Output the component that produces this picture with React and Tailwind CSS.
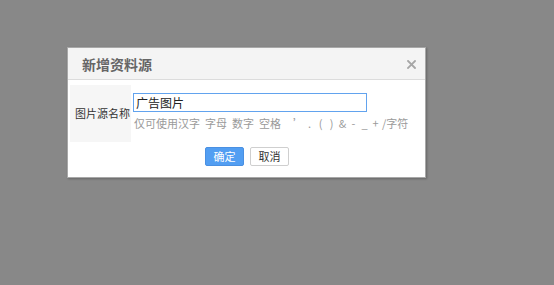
import React from 'react';

const font = { fontFamily: '"Noto Sans CJK SC", "Noto Sans", sans-serif' };

const symbols = ['’', '.', '(', ')', '&', '-', '_', '+'];

export default function App() {
  return (
    <div className="w-[554px] h-[285px] bg-[#888888] overflow-hidden" style={font}>
      <div className="ml-[67px] pt-[47px]">
        <div className="w-[359px] h-[131px] bg-white border border-[#a8a8a8] shadow-[1px_1px_2px_rgba(0,0,0,0.25)] flex flex-col">
          {/* header */}
          <div className="h-[32px] bg-[#f4f4f4] border-b border-[#dcdcdc] flex items-center justify-between pl-[14px] pr-[9px]">
            <span className="text-[14px] font-bold text-[#666] leading-none">新增资料源</span>
            <svg width="9" height="9" viewBox="0 0 9 9" className="mt-[1px]">
              <path d="M1 1 L8 8 M8 1 L1 8" stroke="#a6a6a6" strokeWidth="1.8" strokeLinecap="square" />
            </svg>
          </div>

          {/* body */}
          <div className="flex pt-[5px] pl-[2px]">
            <div className="w-[61px] h-[57px] bg-[#f6f6f6] flex items-center justify-end pr-[1px]">
              <span className="text-[11px] text-[#333] leading-none whitespace-nowrap">图片源名称</span>
            </div>
            <div className="pl-[2px] pt-[8px]">
              <div className="w-[234px] h-[19px] border border-[#62a3ee] flex items-center px-[2px]">
                <span className="text-[12px] text-[#222] leading-none">广告图片</span>
              </div>
              <div className="mt-[6px] flex items-center text-[11px] text-[#9a9a9a] leading-none whitespace-nowrap pl-[1px]">
                <span>仅可使用汉字</span>
                <span className="ml-[5px]">字母</span>
                <span className="ml-[5px]">数字</span>
                <span className="ml-[5px]">空格</span>
                <span className="ml-[12px] flex">
                  {symbols.map((s, i) => (
                    <span key={i} className="w-[11px] text-center">{s}</span>
                  ))}
                </span>
                <span className="ml-[1px]">/字符</span>
              </div>
            </div>
          </div>

          {/* buttons */}
          <div className="flex gap-[6px] pl-[137px] pt-[5px]">
            <button className="w-[39px] h-[19px] bg-[#529ef2] text-white text-[11px] leading-none rounded-[2px] border border-[#4a90e2] flex items-center justify-center">
              确定
            </button>
            <button className="w-[39px] h-[19px] bg-white text-[#333] text-[11px] leading-none rounded-[2px] border border-[#cfcfcf] flex items-center justify-center">
              取消
            </button>
          </div>
        </div>
      </div>
    </div>
  );
}
